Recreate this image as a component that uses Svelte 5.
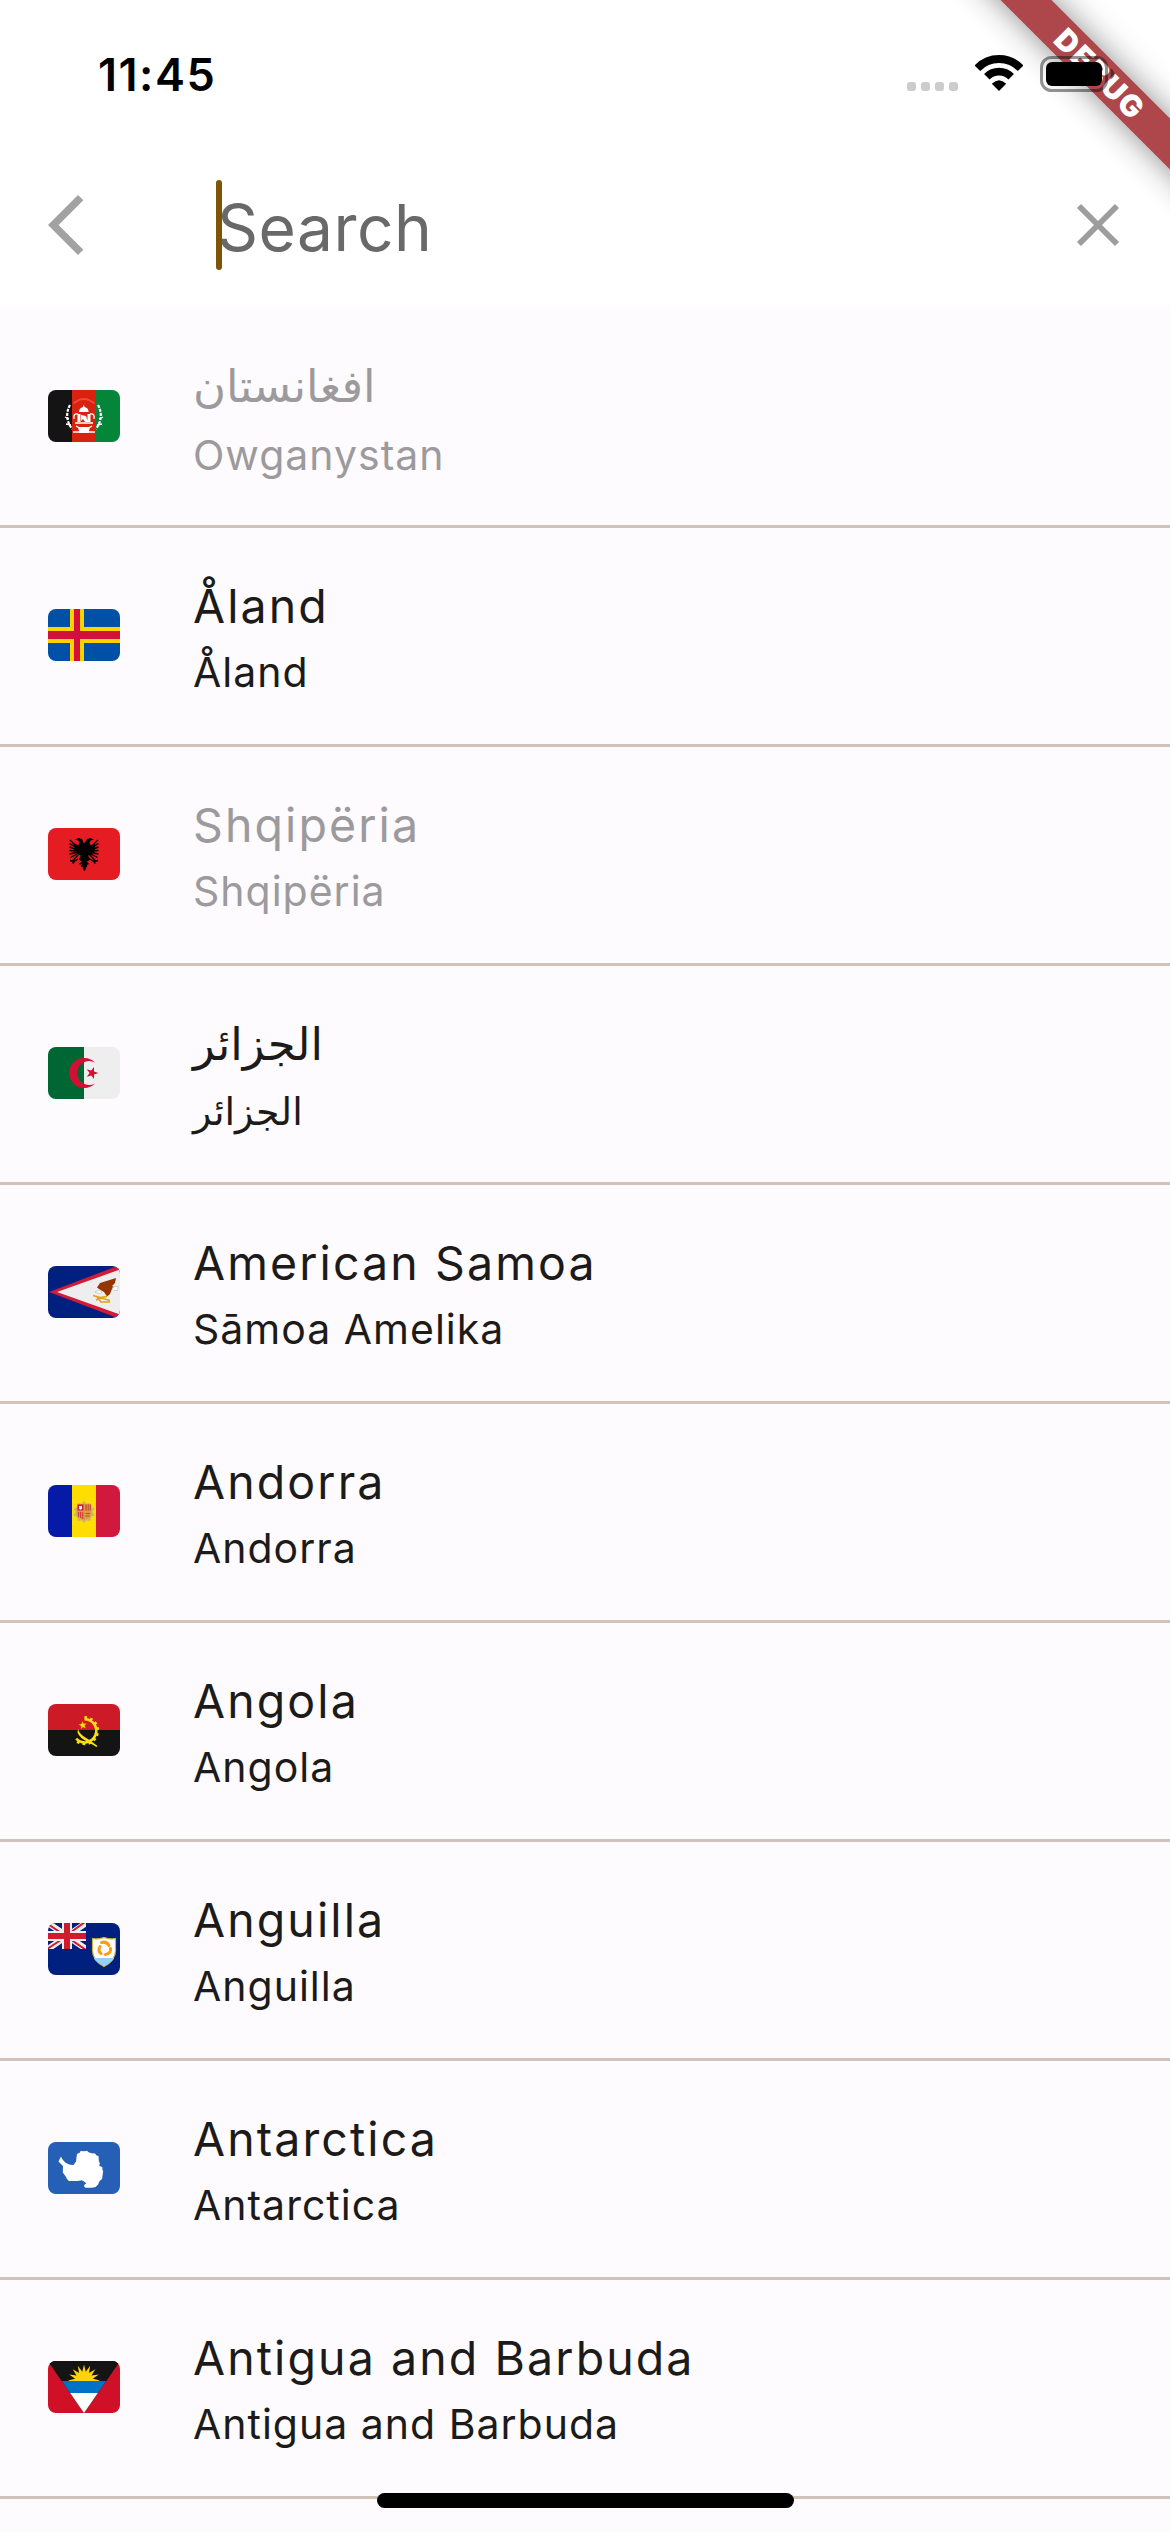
<script>
  const countries = [
    { code: 'af', name: 'افغانستان', local: 'Owganystan', rtlName: true, muted: true },
    { code: 'ax', name: 'Åland', local: 'Åland' },
    { code: 'al', name: 'Shqipëria', local: 'Shqipëria', muted: true },
    { code: 'dz', name: 'الجزائر', local: 'الجزائر', rtlName: true, rtlLocal: true },
    { code: 'as', name: 'American Samoa', local: 'Sāmoa Amelika' },
    { code: 'ad', name: 'Andorra', local: 'Andorra' },
    { code: 'ao', name: 'Angola', local: 'Angola' },
    { code: 'ai', name: 'Anguilla', local: 'Anguilla' },
    { code: 'aq', name: 'Antarctica', local: 'Antarctica' },
    { code: 'ag', name: 'Antigua and Barbuda', local: 'Antigua and Barbuda' },
  ];

  // Points of a star polygon; `turn` is the angle of the first tip in degrees.
  function star(cx, cy, outer, inner, tips, turn) {
    return Array.from({ length: tips * 2 }, (_, i) => {
      const r = i % 2 ? inner : outer;
      const a = ((turn + (i * 180) / tips) * Math.PI) / 180;
      return `${(cx + r * Math.cos(a)).toFixed(2)},${(cy + r * Math.sin(a)).toFixed(2)}`;
    }).join(' ');
  }
</script>

{#snippet flag(code)}
  <svg class="flag" viewBox="0 0 72 52">
    {#if code === 'af'}
      <path fill="#141414" d="M0 0h24v52H0z" />
      <path fill="#d8210f" d="M24 0h24v52H24z" />
      <path fill="#05853a" d="M48 0h24v52H48z" />
      <path d="M25.5 13.5Q36 4.500 46.500 13.500" fill="none" stroke="#f0493c" stroke-width="1.800" />
      <g fill="none" stroke="#fff" stroke-width="2.200" stroke-dasharray="3 1.200">
        <path d="M22 15Q15.500 27 24 39" />
        <path d="M50 15Q56.500 27 48 39" />
      </g>
      <g fill="none" stroke="#fff" stroke-width="1.300">
        <path d="M17 27l4 2M18 34l5 1M55 27l-4 2M54 34l-5 1" />
        <path d="M26 29q-1-6 4-5M46 29q1-6-4-5M27 33h18M25 42h7M47 42h-7" />
        <path d="M28 36q8 6 16 0" />
      </g>
      <path fill="#fff" d="M31 22q0-4 4-5l.8-2.500.8 2.500q4 1 4 5zM29.500 24h3v8h-3zM39.500 24h3v8h-3zM33 25l5 1 2 6h-3l-2-3-2 2zM30 37h12l-1.500 6h-9z" />
    {:else if code === 'ax'}
      <path fill="#0051a5" d="M0 0h72v52H0z" />
      <path fill="#ffd300" d="M22 0h14v18h36v16H36v18H22V34H0V18h22z" />
      <path fill="#d3103a" d="M26 0h6v22h40v8H32v22h-6V30H0v-8h26z" />
    {:else if code === 'al'}
      <path fill="#e51c22" d="M0 0h72v52H0z" />
      <path d="M36 15.500l-2-4.500-3.500-1-3.500 1.800 3 .4 1.500 2-1 3-2.500-1-2-1.200.5 8 4 4 2.500.5-2.500 4 3.500 2-.5 3 1 2 1 3.500 1 1 1-1 1-3.500 1-2-.5-3 3.500-2-2.500-4 2.500-.5 4-4 .5-8-2 1.200-2.500 1-1-3 1.500-2 3-.4-3.500-1.800-3.500 1z" />
      <g fill="none" stroke="#000" stroke-width="1.400">
        <path d="M28 18l-6-6M28 19.500l-6.500-4M28 21.500l-6.500-2.500M28 23l-6.500-.5M28.500 24.500l-7 1.500M29 26l-6.500 3.500M30 27l-5 5.500M30 31l-4 2.500-4-1M27 33l-2.500 2.500" />
        <path d="M44 18l6-6M44 19.500l6.500-4M44 21.500l6.500-2.500M44 23l6.500-.5M43.500 24.500l7 1.500M43 26l6.500 3.500M42 27l5 5.500M42 31l4 2.500 4-1M45 33l2.500 2.500" />
        <path d="M31.500 36l4-2M40.500 36l-4-2M33 38.500l3-1.500M39 38.500l-3-1.500" />
      </g>
    {:else if code === 'dz'}
      <path fill="#006633" d="M0 0h36v52H0z" />
      <path fill="#eee" d="M36 0h36v52H36z" />
      <path fill="#d21034" d="M47 15.500a15 15 0 1 0 0 21 12 12 0 1 1 0-21z" />
      <polygon fill="#d21034" points={star(44, 26, 6.4, 2.5, 5, 0)} />
    {:else if code === 'as'}
      <path fill="#002080" d="M0 0h72v52H0z" />
      <path fill="#d01c36" d="M1 26 72-1v54z" />
      <path fill="#eee" d="M9 26 72 3.500v45z" />
      <path fill="#963500" d="M68 12 52 17l-3 4.500 2 1.500 5 3 3 4.500 3-2.500 2-5 2-2-2-1 3-3z" />
      <path fill="#fff" stroke="#aaa" stroke-width=".5" d="M47 26l4-2 3 2-2 2zM64 22l3-1.500h3l-.5 4H66z" />
      <path fill="none" stroke="#e0a313" stroke-width="1.600" d="M45 29.500l7 2 7-1M48 34l5-2 9 2.500M49 31l4 5h9" />
    {:else if code === 'ad'}
      <path fill="#061aa8" d="M0 0h24v52H0z" />
      <path fill="#fede00" d="M24 0h24v52H24z" />
      <path fill="#d0193c" d="M48 0h24v52H48z" />
      <polygon fill="#cfb46b" points={star(36, 27, 11, 8.6, 10, -90)} />
      <path fill="#d5a13c" d="M29 19h14v11q0 3-7 5-7-2-7-5z" />
      <path fill="#d0193c" d="M29.500 19.500h6v6h-6z" />
      <path fill="#eee" d="M31 21h3v3l-1.500.8L31 24z" />
      <path stroke="#d0433c" stroke-width="1.200" d="M38 19.500v6M40.200 19.500v6M42.300 19.500v6M30.500 27v5M32.600 27v6M34.700 27v7M37.500 28.500h4.500M37.500 31h4" />
    {:else if code === 'ao'}
      <path fill="#cd1a27" d="M0 0h72v26H0z" />
      <path fill="#141414" d="M0 26h72v26H0z" />
      <path d="M36.500 15.200a11.600 11.600 0 1 1-8.300 19.500" fill="none" stroke="#ffdf14" stroke-width="2.600" />
      <path d="M36.500 13.300a13.300 13.300 0 1 1-9.300 22.800" fill="none" stroke="#ffdf14" stroke-width="2.600" stroke-dasharray="2.600 3.200" />
      <polygon fill="#ffdf14" points={star(34.8, 21.3, 4.2, 1.7, 5, -98)} />
      <path fill="#ffdf14" d="M30 25q1.500 5.500 9 9.500l4 2.500 6.500 5-1 1-7.500-4.500q-9.500-4-11.500-10z" />
    {:else if code === 'ai'}
      <path fill="#002080" d="M0 0h72v52H0z" />
      <svg width="38" height="26" viewBox="0 0 38 26">
        <path stroke="#eee" stroke-width="6" d="M0 0l38 26M38 0 0 26" />
        <path stroke="#cf1b2b" stroke-width="2" d="M0 1l19 13M19 12 37-1M19 14l19 13M-1 26l20-13" />
        <path stroke="#eee" stroke-width="10" d="M19 0v26M0 13h38" />
        <path stroke="#cf1b2b" stroke-width="6" d="M19 0v26M0 13h38" />
      </svg>
      <path fill="#fff" stroke="#c9b537" stroke-width="1.200" d="M44.500 15.500q5 1.300 11.500-1 6.500 2.300 11.500 1v12q0 10-11.500 16-11.500-6-11.500-16z" />
      <path fill="#94cfff" d="M45.700 35h20.600q-3 5-10.300 7.800Q48.700 40 45.700 35z" />
      <g fill="none" stroke="#ff9b18" stroke-width="3" stroke-linecap="round">
        <path d="M53.500 19.500q5-1.500 7.500 3" />
        <path d="M62.500 25.500q.5 5-5 6" />
        <path d="M53 30.500q-3.500-3-1-7" />
      </g>
    {:else if code === 'aq'}
      <path fill="#265fb6" d="M0 0h72v52H0z" />
      <path fill="#fff" d="M13 14.500l1.500 3 3 3.200 4.500 2 3.500.3 2.500-3.500.5-4 .5-3.500 3-1.500.5-1.500 4 .3 2.500-.5 1.500 1.500 3 1 3.500.2 1.500 2 2 .5.300 4.500 1 3-.5 2.500 3 1 .2 3 .7 1-.6 4-.5 4-2.500 2-1.500 3.500-2.500 2.500-3.500.8h-6.500l-1.500-1.300.4-2 1.800-1-1.500-1.500-3-1.700-4 .8-9-.2-1.800-2-1-2-1.700-2.300-1.500-2 .2-6.500-1.500-1.500-3-3z" />
    {:else}
      <path fill="#cf1027" d="M0 0h72v52H0z" />
      <path fill="#141414" d="M0 0h72L58.150 20h-44.300z" />
      <path fill="#141414" d="M0 0h72L36 52z" />
      <path fill="#0073c7" d="M13.850 20h44.300l-8.300 12h-27.700z" />
      <path fill="#fff" d="M22.150 32h27.700L36 52z" />
      <svg width="72" height="20" viewBox="0 0 72 20">
        <polygon fill="#ffd20a" points={star(36, 19.5, 16, 9, 16, -90)} />
      </svg>
    {/if}
  </svg>
{/snippet}

<div class="screen">
  <header>
    <div class="status">
      <time>11:45</time>
      <div class="indicators">
        <div class="dots"><i></i><i></i><i></i><i></i></div>
        <svg class="wifi" viewBox="0 0 48 36">
          <path d="M2.400 13.200a30 30 0 0 1 43.200 0M11.800 21.700a17.300 17.300 0 0 1 24.400 0" fill="none" stroke="#000" stroke-width="7.800" />
          <path d="M24 36l-7.200-7.200q7.200-7 14.400 0z" />
        </svg>
        <svg class="battery" viewBox="0 0 76 36">
          <rect x="1.500" y="1.500" width="65" height="33" rx="10" fill="none" stroke="#000" stroke-opacity=".42" stroke-width="3" />
          <rect x="6" y="6" width="56" height="24" rx="6" />
          <path d="M70.500 12.500q4 2 4 5.500t-4 5.500z" fill-opacity=".45" />
        </svg>
      </div>
    </div>
    <div class="search">
      <svg class="back" viewBox="0 0 36 60"><path d="M0 30 30 0l5.300 5.300L10.600 30l24.700 24.700L30 60z" /></svg>
      <div class="field"><span class="cursor"></span>Search</div>
      <svg class="clear" viewBox="0 0 44 44"><path d="M3 3l38 38M41 3 3 41" /></svg>
    </div>
  </header>

  <ul>
    {#each countries as c}
      <li class:muted={c.muted}>
        {@render flag(c.code)}
        <div class="names">
          <div class="name" class:rtl={c.rtlName} class:above-latin={c.rtlName && !c.rtlLocal}>{c.name}</div>
          <div class="local" class:rtl={c.rtlLocal}>{c.local}</div>
        </div>
      </li>
    {/each}
  </ul>

  <div class="banner"><span>DEBUG</span></div>
  <div class="home"></div>
</div>

<style>
  :global(body) {
    background: #fdfbfe;
  }
  .screen {
    position: relative;
    width: 1170px;
    height: 2532px;
    overflow: hidden;
    background: #fdfbfe;
    color: #1d1b1a;
    font-family: Inter, 'DejaVu Sans', sans-serif;
  }
  header {
    box-sizing: border-box;
    height: 306px;
    background: #fff;
  }
  .status {
    position: relative;
    z-index: 2;
    box-sizing: border-box;
    height: 144px;
    padding: 44px 54px 0 98px;
    display: flex;
    justify-content: space-between;
    align-items: flex-start;
  }
  time {
    color: #000;
    font-size: 45px;
    font-weight: 600;
    line-height: 61px;
    letter-spacing: 1.5px;
  }
  .indicators {
    display: flex;
    align-items: flex-end;
    padding-top: 11px;
  }
  .dots {
    display: flex;
    gap: 5px;
    margin-right: 17px;
  }
  .dots i {
    width: 9px;
    height: 9px;
    border-radius: 3px;
    background: #ccc;
  }
  .wifi {
    width: 48px;
    height: 36px;
    margin-right: 17px;
  }
  .battery {
    width: 76px;
    height: 36px;
    margin-bottom: -1px;
  }
  .search {
    display: flex;
    align-items: center;
    height: 162px;
    padding: 0 50px 0 48px;
  }
  .back {
    width: 36px;
    height: 60px;
    fill: #a2a2a2;
  }
  .field {
    position: relative;
    flex: 1;
    margin-left: 133px;
    padding-top: 5px;
    color: #696969;
    font-size: 64px;
    line-height: 80px;
    letter-spacing: 0.5px;
  }
  .cursor {
    position: absolute;
    left: -1px;
    top: -3px;
    width: 6px;
    height: 90px;
    border-radius: 3px;
    background: #7f5408;
  }
  .clear {
    width: 44px;
    height: 44px;
    fill: none;
    stroke: #9d9d9d;
    stroke-width: 5.7;
  }
  ul {
    margin: 0;
    padding: 3px 0 0;
    list-style: none;
  }
  li {
    box-sizing: border-box;
    display: flex;
    height: 219px;
    padding: 46px 48px 0;
    border-bottom: 3px solid #d1c3b9;
  }
  .flag {
    width: 72px;
    height: 52px;
    margin-top: 35px;
    border-radius: 8px;
  }
  .names {
    margin-left: 73px;
  }
  .muted .names {
    color: #9c9a9c;
  }
  .name {
    height: 64px;
    font-size: 46.5px;
    line-height: 64px;
    letter-spacing: 2.1px;
    white-space: nowrap;
  }
  .local {
    height: 50px;
    margin-top: 9px;
    font-size: 41px;
    line-height: 50px;
    letter-spacing: 1px;
    white-space: nowrap;
  }
  .rtl {
    font-family: 'DejaVu Sans', sans-serif;
    letter-spacing: 0;
  }
  .name.rtl {
    margin-top: 1px;
    margin-bottom: 10px;
    font-size: 45px;
  }
  .name.above-latin {
    margin-top: 0;
    margin-bottom: 11px;
    font-size: 45px;
  }
  .local.rtl {
    font-size: 38px;
  }
  .banner {
    position: absolute;
    left: 898px;
    top: 54px;
    width: 400px;
    height: 36px;
    display: flex;
    align-items: center;
    justify-content: center;
    background: #ae474b;
    box-shadow: 0 0 32px rgba(0, 0, 0, 0.45);
    transform: rotate(45deg);
  }
  .banner span {
    padding-left: 6px;
    color: #fff;
    font-size: 30px;
    font-weight: 900;
    letter-spacing: 2px;
  }
  .home {
    position: absolute;
    left: 377px;
    top: 2493px;
    width: 417px;
    height: 15px;
    border-radius: 8px;
    background: #000;
  }
</style>
